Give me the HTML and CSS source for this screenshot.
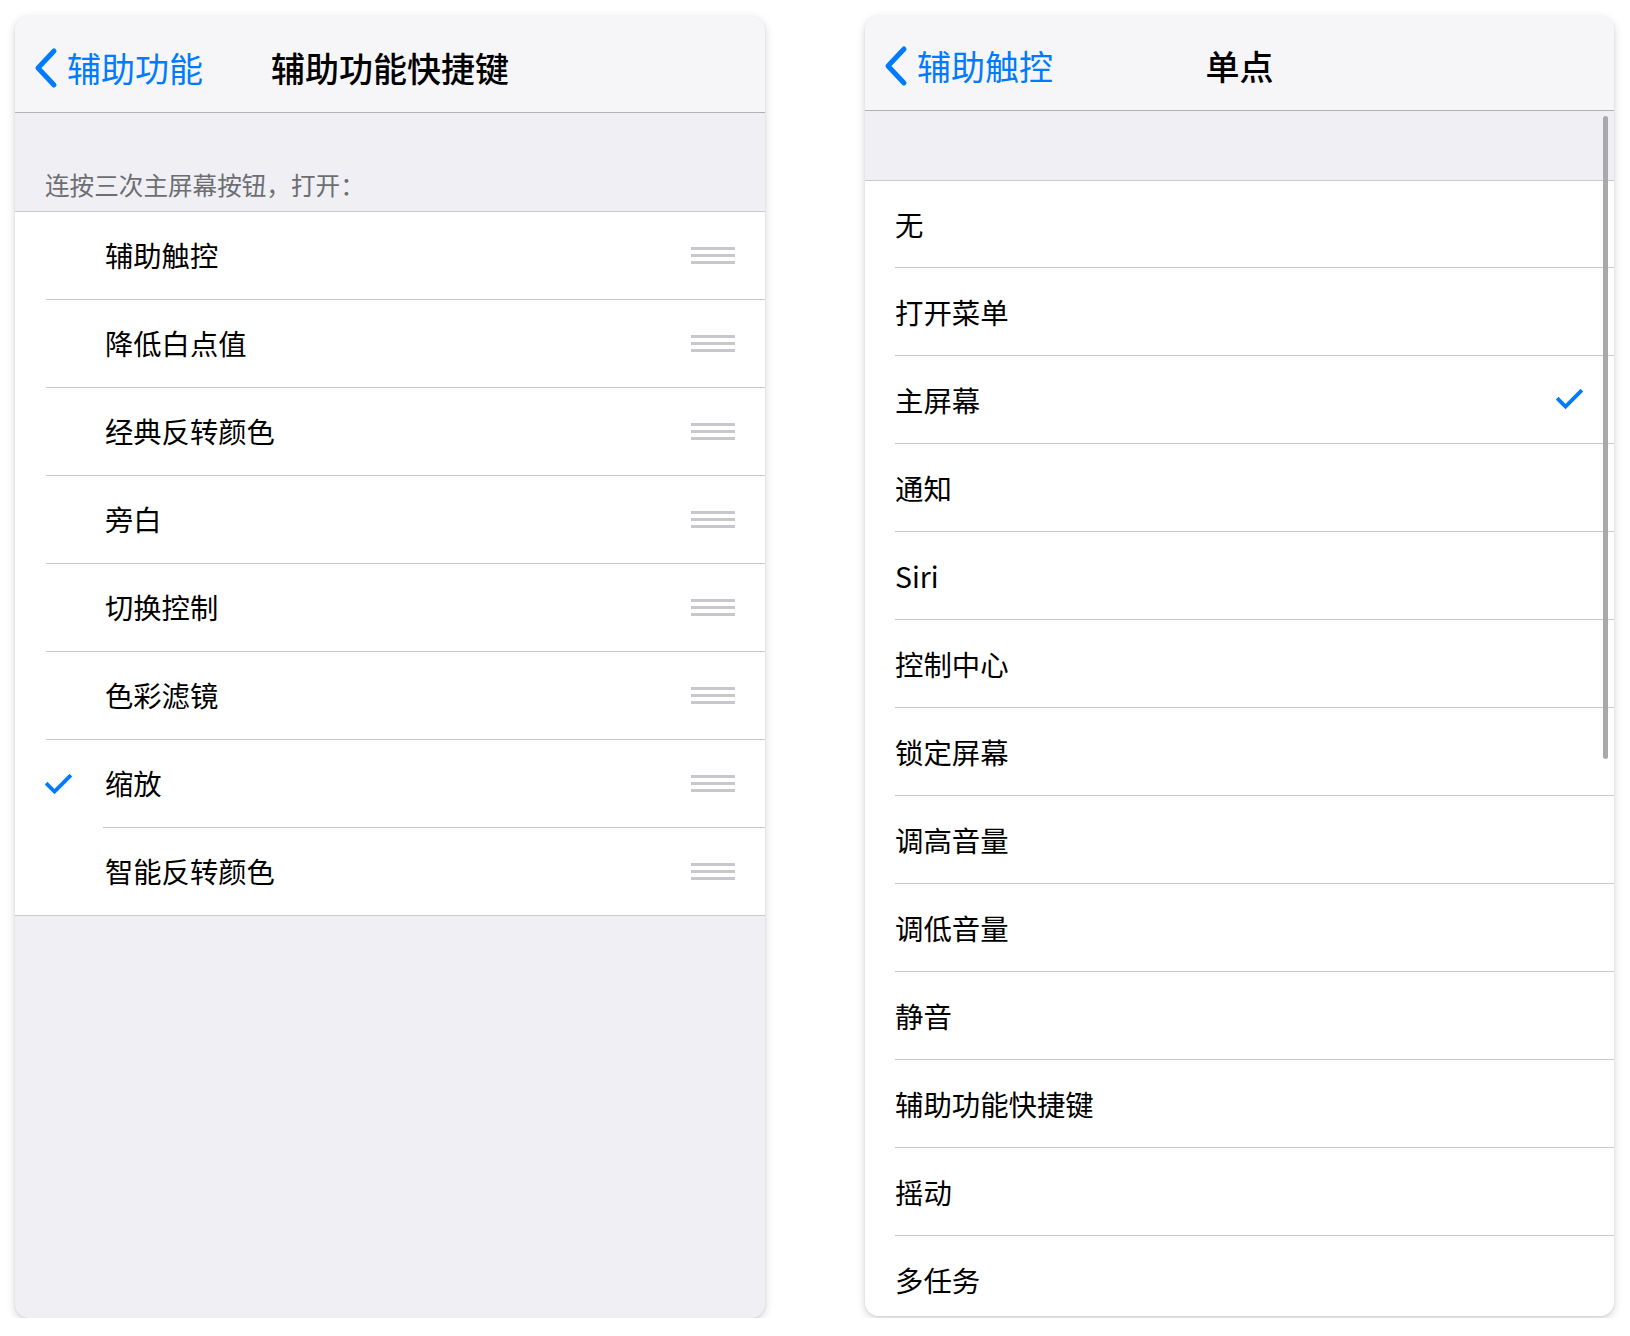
FILE: index.html
```html
<!DOCTYPE html>
<html lang="zh-CN">
<head>
<meta charset="utf-8">
<title>辅助功能</title>
<link rel="stylesheet" href="styles.css">
</head>
<body>
<div class="stage">
  <section class="panel panel--left">
    <header class="nav nav--left">
      <a class="back">
        <svg class="chev" width="26" height="42" viewBox="0 0 26 42"><path d="M21 4 L5 21 L21 38" fill="none" stroke="#007aff" stroke-width="5" stroke-linecap="round" stroke-linejoin="round"/></svg>
        <span class="back-text">辅助功能</span>
      </a>
      <h1 class="title">辅助功能快捷键</h1>
      <span class="spacer"></span>
    </header>
    <div class="section-head">连按三次主屏幕按钮，打开：</div>
    <ul class="list list--reorder">
      <li class="row"><span class="check-slot"></span><span class="main"><span class="label">辅助触控</span><span class="grip"><i></i><i></i><i></i></span></span></li>
      <li class="row"><span class="check-slot"></span><span class="main"><span class="label">降低白点值</span><span class="grip"><i></i><i></i><i></i></span></span></li>
      <li class="row"><span class="check-slot"></span><span class="main"><span class="label">经典反转颜色</span><span class="grip"><i></i><i></i><i></i></span></span></li>
      <li class="row"><span class="check-slot"></span><span class="main"><span class="label">旁白</span><span class="grip"><i></i><i></i><i></i></span></span></li>
      <li class="row"><span class="check-slot"></span><span class="main"><span class="label">切换控制</span><span class="grip"><i></i><i></i><i></i></span></span></li>
      <li class="row"><span class="check-slot"></span><span class="main"><span class="label">色彩滤镜</span><span class="grip"><i></i><i></i><i></i></span></span></li>
      <li class="row row--deep"><span class="check-slot"><svg class="check" width="27" height="21" viewBox="0 0 27 21"><path d="M2.5 10.5 L9.5 17.5 L24.5 2.5" fill="none" stroke="#007aff" stroke-width="3.8" stroke-linecap="square"/></svg></span><span class="main"><span class="label">缩放</span><span class="grip"><i></i><i></i><i></i></span></span></li>
      <li class="row row--last"><span class="check-slot"></span><span class="main"><span class="label">智能反转颜色</span><span class="grip"><i></i><i></i><i></i></span></span></li>
    </ul>
  </section>

  <section class="panel panel--right">
    <header class="nav nav--right">
      <a class="back">
        <svg class="chev" width="26" height="42" viewBox="0 0 26 42"><path d="M21 4 L5 21 L21 38" fill="none" stroke="#007aff" stroke-width="5" stroke-linecap="round" stroke-linejoin="round"/></svg>
        <span class="back-text">辅助触控</span>
      </a>
      <h1 class="title">单点</h1>
      <span class="spacer"></span>
    </header>
    <div class="scroll">
      <div class="gap-head"></div>
      <ul class="list list--plain">
        <li class="item">无</li>
        <li class="item">打开菜单</li>
        <li class="item item--checked">主屏幕<svg class="check" width="27" height="21" viewBox="0 0 27 21"><path d="M2.5 10.5 L9.5 17.5 L24.5 2.5" fill="none" stroke="#007aff" stroke-width="3.8" stroke-linecap="square"/></svg></li>
        <li class="item">通知</li>
        <li class="item">Siri</li>
        <li class="item">控制中心</li>
        <li class="item">锁定屏幕</li>
        <li class="item">调高音量</li>
        <li class="item">调低音量</li>
        <li class="item">静音</li>
        <li class="item">辅助功能快捷键</li>
        <li class="item">摇动</li>
        <li class="item">多任务</li>
      </ul>
      <span class="scrollbar"></span>
    </div>
  </section>
</div>
</body>
</html>
```

FILE: styles.css
```css
* { box-sizing: border-box; }

html, body {
  margin: 0;
  padding: 0;
  background: #ffffff;
}

body {
  font-family: "Noto Sans CJK SC", "Noto Sans", sans-serif;
  color: #000;
}

.stage {
  display: flex;
  align-items: flex-start;
  gap: 100px;
  padding: 16px 0 0 15px;
}

.panel {
  position: relative;
  width: 750px;
  border-radius: 14px;
  overflow: hidden;
  background: #efeff4;
  box-shadow: 0 3px 10px rgba(0, 0, 0, 0.16), 0 1px 3px rgba(0, 0, 0, 0.08);
  display: flex;
  flex-direction: column;
}

.panel--left { height: 1302px; }
.panel--right { height: 1300px; width: 749px; }

/* navigation bar */
.nav {
  flex: none;
  display: grid;
  grid-template-columns: 1fr auto 1fr;
  align-items: center;
  background: #f6f6f8;
  border-bottom: 1px solid #b1b1b3;
  padding: 0 18px;
}

.nav--left { height: 97px; padding-top: 7px; }
.nav--right { height: 95px; padding-top: 5px; }

.back {
  display: flex;
  align-items: center;
  gap: 8px;
  color: #007aff;
  text-decoration: none;
}

.chev { display: block; flex: none; }

.back-text {
  font-size: 34px;
  line-height: 42px;
  white-space: nowrap;
}

.title {
  margin: 0;
  font-size: 34px;
  line-height: 42px;
  font-weight: 500;
  white-space: nowrap;
}

/* section header */
.section-head {
  flex: none;
  height: 98px;
  display: flex;
  align-items: flex-end;
  padding: 0 0 11px 30px;
  font-size: 24.6px;
  line-height: 32px;
  color: #6d6d72;
}

/* lists */
.list {
  list-style: none;
  margin: 0;
  padding: 0;
  background: #fff;
  border-top: 1px solid #c8c7cc;
}

.list--reorder {
  border-bottom: 1px solid #c8c7cc;
}

.row {
  display: flex;
  margin-left: 31px;
  border-bottom: 1px solid #c8c7cc;
}

.row--deep { border-bottom: none; }
.row--deep .main { border-bottom: 1px solid #c8c7cc; height: 88px; }
.row--last { border-bottom: none; }

.check-slot {
  flex: none;
  width: 57px;
  display: flex;
  align-items: center;
}

.check-slot .check { margin-left: -1px; margin-top: 0; }

.main {
  flex: 1;
  height: 87px;
  display: flex;
  align-items: center;
  justify-content: space-between;
  padding-right: 30px;
}

.label {
  font-size: 28.3px;
  line-height: 36px;
  white-space: nowrap;
  padding-left: 2px;
  margin-top: -2px;
}

.grip {
  display: flex;
  flex-direction: column;
  gap: 4px;
  width: 44px;
}

.grip i {
  display: block;
  height: 3px;
  background: #c7c7cc;
}

/* right panel */
.scroll {
  position: relative;
  flex: 1;
  overflow: hidden;
}

.gap-head {
  height: 69px;
}

.item {
  position: relative;
  display: flex;
  align-items: center;
  justify-content: space-between;
  height: 88px;
  margin-left: 30px;
  padding-right: 31px;
  border-bottom: 1px solid #c8c7cc;
  font-size: 28.4px;
  line-height: 36px;
  white-space: nowrap;
}

.item:first-child { height: 87px; }

.item .check { display: block; margin-top: 0; }

.scrollbar {
  position: absolute;
  top: 5px;
  right: 6px;
  width: 5px;
  height: 643px;
  border-radius: 3px;
  background: #a9a9ab;
}
```
